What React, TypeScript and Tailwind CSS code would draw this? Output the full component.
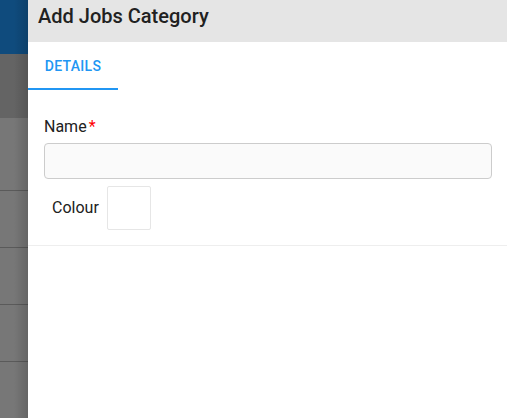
const rows = [73, 57, 57, 57];

export default function App() {
  return (
    <div className="flex h-[418px] w-[507px] overflow-hidden font-['Roboto',sans-serif]">
      {/* dimmed page behind the drawer */}
      <div className="relative flex w-[28px] flex-col bg-[#777777]">
        <div className="h-[54px] bg-[#0f4b7d]" />
        <div className="h-[64px] bg-[#646464]" />
        {rows.map((h, i) => (
          <div key={i} className="border-b border-[#5a5a5a]" style={{ height: h }} />
        ))}
        <div className="absolute inset-y-0 right-0 w-[14px] bg-gradient-to-r from-transparent to-black/15" />
      </div>

      {/* drawer */}
      <div className="flex flex-1 flex-col bg-white">
        <div className="flex h-[42px] items-center bg-[#e5e5e5] px-[10px] pb-[10px]">
          <h1 className="text-[20px] font-medium text-[#212121]">Add Jobs Category</h1>
        </div>

        <div className="flex h-[48px]">
          <button className="flex w-[90px] items-center justify-center border-b-2 border-[#2196f3] pt-[3px] text-[14px] font-medium uppercase tracking-[0.3px] text-[#2196f3]">
            Details
          </button>
        </div>

        <div className="border-b border-[#eeeeee] pb-[15px] pl-[16px] pr-[15px] pt-[27px]">
          <label className="block text-[16px] leading-[19px] text-[#212121]">
            Name<span className="ml-[2px] text-[#ff0000]">*</span>
          </label>
          <input className="mt-[7px] h-[36px] w-full rounded-[4px] border border-[#cccccc] bg-[#fafafa] px-2 outline-none" />
          <div className="mt-[7px] flex items-center gap-[8px] pl-[8px]">
            <span className="text-[16px] text-[#212121]">Colour</span>
            <div className="h-[44px] w-[44px] rounded-[2px] border border-[#e6e6e6] bg-white" />
          </div>
        </div>
      </div>
    </div>
  );
}
